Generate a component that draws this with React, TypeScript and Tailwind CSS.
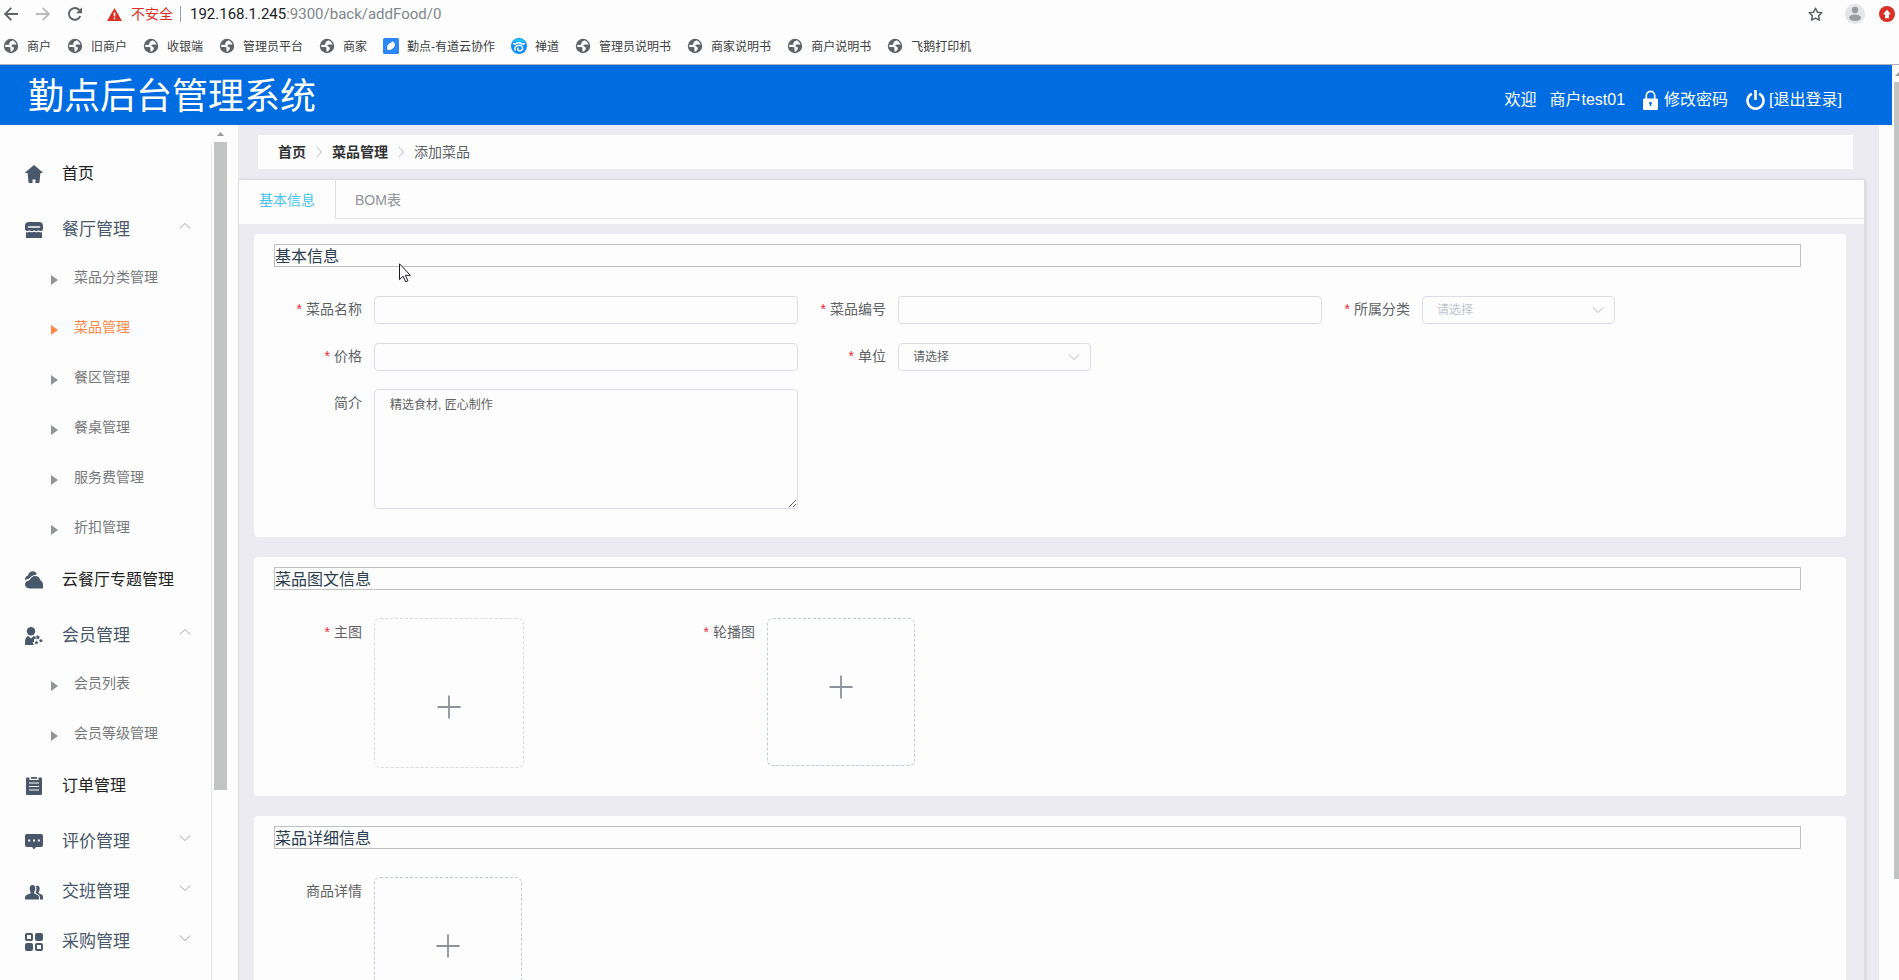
import type { ReactNode } from "react";
import { FiStar } from "react-icons/fi";

type IconName =
  | "home"
  | "shop"
  | "cloud"
  | "member"
  | "order"
  | "comment"
  | "people"
  | "grid";

interface MenuEntry {
  title: string;
  icon: IconName;
  group?: boolean;
  children?: string[];
}

const bookmarks = [
  { title: "商户", icon: "globe" },
  { title: "旧商户", icon: "globe" },
  { title: "收银端", icon: "globe" },
  { title: "管理员平台", icon: "globe" },
  { title: "商家", icon: "globe" },
  { title: "勤点-有道云协作", icon: "youdao" },
  { title: "禅道", icon: "zentao" },
  { title: "管理员说明书", icon: "globe" },
  { title: "商家说明书", icon: "globe" },
  { title: "商户说明书", icon: "globe" },
  { title: "飞鹅打印机", icon: "globe" },
];

const menu: MenuEntry[] = [
  { title: "首页", icon: "home" },
  {
    title: "餐厅管理",
    icon: "shop",
    group: true,
    children: [
      "菜品分类管理",
      "菜品管理",
      "餐区管理",
      "餐桌管理",
      "服务费管理",
      "折扣管理",
    ],
  },
  { title: "云餐厅专题管理", icon: "cloud" },
  {
    title: "会员管理",
    icon: "member",
    group: true,
    children: ["会员列表", "会员等级管理"],
  },
  { title: "订单管理", icon: "order" },
  { title: "评价管理", icon: "comment", group: true },
  { title: "交班管理", icon: "people", group: true },
  { title: "采购管理", icon: "grid", group: true },
];

const activeItem = "菜品管理";

function BookmarkIcon({ name }: { name: string }) {
  if (name === "youdao") {
    return (
      <svg className="size-4" viewBox="0 0 16 16">
        <rect width="16" height="16" rx="1.500" fill="#2d86f5" />
        <path
          d="M4.200 12V8.800C4.200 6.500 6.800 6 9.300 3.600c1.900.6 3 2.200 2.500 3.900C11 9.800 8.800 12 6.500 12Z"
          fill="#fff"
        />
      </svg>
    );
  }
  if (name === "zentao") {
    return (
      <svg className="size-4" viewBox="0 0 16 16">
        <circle cx="8" cy="8" r="8" fill="#0c8dff" />
        <path d="M1.500 4A8 8 0 0 1 14.500 4Z" fill="#1fc3fb" />
        <path
          d="M2.500 5.500C4 7 5.500 4.500 8 4.800s3 1.800 5.500.9M4.200 12C2.800 9.500 5 7.300 8 7.200c3.500 0 4.800 3.500 2.200 5.200-2.200 1.200-4.500-.6-3.200-2.200"
          fill="none"
          stroke="#fff"
          strokeWidth="1.500"
          strokeLinecap="round"
        />
      </svg>
    );
  }
  return (
    <svg className="size-4" viewBox="0 0 16 16">
      <circle cx="8" cy="8" r="7.200" fill="#5f6368" />
      <path
        d="M9.300 2.200C8.500 3.300 7 3.200 6.600 4.400c-.3 1 .4 1.600-.6 2.200-1 .5-2 .3-3.600.2-.2.800-.2 1.500-.1 2.200 1.700-.1 4.300-.3 5 .5.600.8-.3 1.600.2 2.500.3.600.2 1 .1 1.700 1.500-.2 2.800-1.600 3.300-3 .3-1.300-.8-1.900-1.900-2.300-.8-.3-.8-1.100 0-1.500 1-.5 2.500-.3 4.500-.1-.3-2-1.800-3.900-4.200-4.600Z"
        fill="#fff"
      />
    </svg>
  );
}

const iconShapes: Record<IconName, ReactNode> = {
  home: (
    <path d="M9 1 .4 8.200c-.3.300-.1.800.3.800H2.600L3.500 18c0 .6.400 1 1 1h3v-3.600h3V19h3c.6 0 1-.4 1-1L15.400 9h1.900c.4 0 .6-.5.300-.8Z" />
  ),
  shop: (
    <>
      <path
        fillRule="evenodd"
        d="M4 2h10c2.800 0 4 1.500 4 4v3c0 1.300-1 2-2.200 2-1.200 0-1.700-.8-2.300-.8s-1.100.8-2.300.8S9.600 10.200 9 10.200s-1.100.8-2.300.8-1.700-.8-2.300-.8-1 .8-2.200.8C1 11 0 10.300 0 9V6c0-2.500 1.200-4 4-4Zm-.5 4.200a.8.800 0 0 0 0 1.600h11a.8.800 0 0 0 0-1.600Z"
      />
      <path d="M1 12.300c1.600.4 2.700 0 3.500-.6.900.7 2.300.9 4.500 0 1.500.9 3.200.8 4.500 0 .9.700 2 .9 3.500.6V18H1Z" />
    </>
  ),
  cloud: (
    <>
      <path d="M0 10C0 7.500 1 5.800 3 5.500 3.500 3 5.300 1.200 7.800 1.200c1.800 0 3.200 1 4 2.800L6 8Z" />
      <path
        d="M4.500 18.500C1.800 18.500 0 16.800 0 14.600c0-2 1.200-3.500 3.200-3.800C5.500 10.500 5 6.500 10 6c3 0 4.900 1.800 5.500 4.500C17 11 18 12.600 18 14.500v4Z"
        stroke="#fdfdfd"
        strokeWidth="2.200"
        paintOrder="stroke"
      />
    </>
  ),
  member: (
    <>
      <circle cx="6" cy="5.200" r="4.200" />
      <path d="M0 19v-3c0-3.200 1.300-5.300 3.200-6L6 12.500 8.800 10c1 .3 1.800 1 2.300 1.900L9 13.500V16H7.500l1.500 3Z" />
      <path d="m12.800 8.800.7 1.500 1.700.2-1.200 1.200.3 1.700-1.500-.8-1.500.8.3-1.700-1.200-1.200 1.700-.2ZM16 12.500l.6 1.300 1.400.2-1 1 .2 1.500-1.200-.7-1.300.7.200-1.500-1-1 1.500-.2ZM11.500 14.500l.6 1.300 1.400.2-1 1 .2 1.500-1.200-.7-1.300.7.200-1.500-1-1 1.500-.2Z" />
    </>
  ),
  order: (
    <>
      <path d="M2 1.500h2.500V4h9V1.500H16a1 1 0 0 1 1 1V18a1 1 0 0 1-1 1H2a1 1 0 0 1-1-1V2.500a1 1 0 0 1 1-1Z" />
      <path d="M6 1h6v1.800H6Z" />
      <path d="M4 7h10M4 10.500h10M4 14h10" stroke="#fdfdfd" strokeWidth="1.200" />
    </>
  ),
  comment: (
    <>
      <path d="M2 2h14a2 2 0 0 1 2 2v9a2 2 0 0 1-2 2h-5l-2 2.500L7 15H2a2 2 0 0 1-2-2V4c0-1.100.9-2 2-2Z" />
      <path
        d="M3.200 8.500h2M8 8.500h2M12.800 8.500h2"
        stroke="#fdfdfd"
        strokeWidth="2"
      />
    </>
  ),
  people: (
    <>
      <path d="M7.500 3C9.400 3 10.500 4.500 10.300 6.600c-.2 1.900-.8 3-1.300 3.600 0 1.300.8 1.700 2.400 2.200 2 .7 2.600 1.500 2.600 3.600V17.500H0V16c0-2.300 1.200-3 3.300-3.700 1.800-.5 2.400-.9 2.400-2.100-.5-.6-1-1.700-1-3.600C4.600 4.500 5.700 3 7.500 3Z" />
      <path d="M11 4c3-.8 4.300 1.500 3.500 4-.3 1-.6 1.800-.9 2.200 0 1 .6 1.300 1.800 1.800 2 .8 2.600 1.500 2.600 3.700v1.800h-3c.1-3.500-.5-4.900-3.400-6-.8-.3-1-.6-1-1 .8-1.400 1.400-4.200.4-6.500Z" />
    </>
  ),
  grid: (
    <>
      <path
        fillRule="evenodd"
        d="M2 1h4a2 2 0 0 1 2 2v4a2 2 0 0 1-2 2H2a2 2 0 0 1-2-2V3c0-1.100.9-2 2-2Zm0 2v4h4V3ZM12 11h4a2 2 0 0 1 2 2v4a2 2 0 0 1-2 2h-4a2 2 0 0 1-2-2v-4c0-1.100.9-2 2-2Zm0 2v4h4v-4Z"
      />
      <rect x="10" y="1" width="8" height="8" rx="2" />
      <rect y="11" width="8" height="8" rx="2" />
    </>
  ),
};

function MenuIcon({ name }: { name: IconName }) {
  return (
    <svg
      className="h-5 w-[18px] shrink-0"
      viewBox="0 0 18 20"
      fill="#48576a"
      aria-hidden="true"
    >
      {iconShapes[name]}
    </svg>
  );
}

function Chevron({ className }: { className: string }) {
  return (
    <svg
      className={className}
      viewBox="0 0 12 6"
      fill="none"
      stroke="currentColor"
      aria-hidden="true"
    >
      <path d="m.8.5 5.200 5 5.200-5" />
    </svg>
  );
}

function BrowserBar() {
  return (
    <div className="border-b border-[#b0b0b0]">
      <div className="flex h-7 items-center pl-1 pr-1">
        <div className="flex gap-[18px] text-[#5f6368]">
          <button aria-label="后退">
            <svg className="size-3.5" viewBox="0 0 14 14" fill="none" stroke="currentColor" strokeWidth="1.800">
              <path d="M14 7H1.500M7.300.8 1.100 7l6.200 6.200" />
            </svg>
          </button>
          <button aria-label="前进" className="text-[#bababa]">
            <svg className="size-3.5" viewBox="0 0 14 14" fill="none" stroke="currentColor" strokeWidth="1.800">
              <path d="M0 7h12.500M6.700.8 12.900 7l-6.200 6.200" />
            </svg>
          </button>
          <button aria-label="重新加载">
            <svg className="size-3.5" viewBox="0 0 14 14">
              <path
                d="M12.300 9.200A5.900 5.900 0 1 1 11.300 3"
                fill="none"
                stroke="currentColor"
                strokeWidth="1.900"
              />
              <path d="M14 .2V6.200H8Z" fill="currentColor" />
            </svg>
          </button>
        </div>
        <svg className="ml-[25px] h-[13px] w-[15px]" viewBox="0 0 15 13">
          <path d="M7.500 0 15 13H0Z" fill="#d93025" />
          <path d="M7.500 4.500v4M7.500 9.700v1.600" stroke="#fff" strokeWidth="1.600" />
        </svg>
        <span className="ml-[9px] text-sm text-[#d93025]">不安全</span>
        <span className="ml-[7px] h-4 w-px bg-[#9aa0a6]" />
        <span className="ml-[9px] font-[Roboto,'Noto_Sans_CJK_SC',sans-serif] text-[15px] leading-5 text-[#80868b]">
          <span className="text-[#202124]">192.168.1.245</span>
          :9300/back/addFood/0
        </span>
        <div className="ml-auto flex items-center">
          <button aria-label="收藏">
            <FiStar className="size-[15px] text-[#5f6368]" strokeWidth={2.5} />
          </button>
          <button aria-label="用户" className="ml-[22px]">
            <svg className="size-5" viewBox="0 0 20 20">
              <circle cx="10" cy="10" r="10" fill="#e4e5e8" />
              <circle cx="10" cy="6" r="3.200" fill="#9a9da0" />
              <ellipse cx="10" cy="13.800" rx="6" ry="3.200" fill="#9a9da0" />
            </svg>
          </button>
          <button aria-label="更新" className="ml-3.5">
            <svg className="size-4" viewBox="0 0 16 16">
              <circle cx="8" cy="8" r="8" fill="#d93025" />
              <path d="M8 3.800 12 8.200H10v4H6v-4H4Z" fill="#fff" />
            </svg>
          </button>
        </div>
      </div>
      <div className="flex h-9 items-center gap-4 pl-[3px]">
        {bookmarks.map((item) => (
          <a
            key={item.title}
            href="#"
            className="flex items-center gap-2 whitespace-nowrap text-xs text-[#3c4043]"
          >
            <BookmarkIcon name={item.icon} />
            <span className="pt-0.5">{item.title}</span>
          </a>
        ))}
      </div>
    </div>
  );
}

function Header() {
  return (
    <header className="flex h-[60px] shrink-0 items-center justify-between bg-[#006ce1] pl-7 pr-[50px] text-white">
      <h1 className="pt-1 text-4xl">勤点后台管理系统</h1>
      <div className="flex items-center pt-2.5 text-base">
        <span>欢迎</span>
        <span className="ml-[13px]">商户test01</span>
        <a href="#" className="ml-[18px] flex items-center gap-1.5">
          <svg className="h-5 w-[15px]" viewBox="0 0 15 20">
            <path
              d="M3.300 9V5.500a4.200 4.200 0 0 1 8.400 0V9"
              fill="none"
              stroke="#fff"
              strokeWidth="1.700"
            />
            <rect y="8.500" width="15" height="11.500" rx="1" fill="#fff" />
            <path d="M7.500 12v4M6.200 13.300h2.600" stroke="#006ce1" strokeWidth="1.500" />
          </svg>
          修改密码
        </a>
        <a href="#" className="ml-[18px] flex items-center gap-1">
          <svg
            className="h-5 w-[19px]"
            viewBox="0 0 19 20"
            fill="none"
            stroke="#fff"
            strokeWidth="2.600"
          >
            <path d="M5.800 3.600a8 8 0 1 0 7.400 0M9.500 0v10" />
          </svg>
          [退出登录]
        </a>
      </div>
    </header>
  );
}

function Sidebar() {
  return (
    <aside className="flex w-[238px] shrink-0 overflow-hidden">
      <nav className="mt-5 w-[212px] border-r border-[#e6e6e6] pt-1">
        <ul>
          {menu.map((entry) => (
            <li key={entry.title}>
              {entry.group ? (
                <button className="flex h-[50px] w-full items-center pl-[25px] pr-5 text-[17px] text-[#48576a]">
                  <MenuIcon name={entry.icon} />
                  <span className="ml-[19px]">{entry.title}</span>
                  <Chevron
                    className={
                      entry.children
                        ? "mb-2 ml-auto h-1.5 w-3 rotate-180 text-[#a0a4ab]"
                        : "mb-2 ml-auto h-1.5 w-3 text-[#a0a4ab]"
                    }
                  />
                </button>
              ) : (
                <a
                  href="#"
                  className="mb-1.5 flex h-[50px] items-center pl-[25px] text-base text-[#222]"
                >
                  <MenuIcon name={entry.icon} />
                  <span className="ml-[19px]">{entry.title}</span>
                </a>
              )}
              {entry.children && (
                <ul>
                  {entry.children.map((child) => (
                    <li key={child}>
                      <a
                        href="#"
                        className={
                          child === activeItem
                            ? "flex h-[50px] items-center pl-[51px] text-sm text-[#ff8746]"
                            : "flex h-[50px] items-center pl-[51px] text-sm text-[#77787c]"
                        }
                      >
                        <svg
                          className="h-2.5 w-[7px]"
                          viewBox="0 0 7 10"
                          fill={child === activeItem ? "#ff8746" : "#909399"}
                        >
                          <path d="M0 0v10l7-5Z" />
                        </svg>
                        <span className="ml-4 pb-1.5">{child}</span>
                      </a>
                    </li>
                  ))}
                </ul>
              )}
            </li>
          ))}
        </ul>
      </nav>
      <div className="ml-0.5 flex w-[13px] flex-col">
        <div className="flex h-[17px] shrink-0 items-center justify-center">
          <svg className="h-1 w-[7px]" viewBox="0 0 7 4" fill="#9a9a9a">
            <path d="M3.500 0 7 4H0Z" />
          </svg>
        </div>
        <div className="flex-[341] bg-[#c2c4c3]" />
        <div className="flex-[100]" />
      </div>
    </aside>
  );
}

function Breadcrumb() {
  return (
    <nav className="ml-5 mr-[26px] mt-2.5 flex h-[34px] items-center bg-[#fdfdfd] px-5 text-sm">
      <a href="#" className="font-bold text-[#303133]">
        首页
      </a>
      <Chevron className="mx-[7px] h-1.5 w-3 -rotate-90 text-[#b4b8bf]" />
      <a href="#" className="font-bold text-[#303133]">
        菜品管理
      </a>
      <Chevron className="mx-[7px] h-1.5 w-3 -rotate-90 text-[#b4b8bf]" />
      <span className="text-[#606266]">添加菜品</span>
    </nav>
  );
}

function Card({ title, children }: { title: string; children: ReactNode }) {
  return (
    <section className="rounded bg-[#fdfdfd] pb-7 pl-5 pt-2.5">
      <h2 className="mb-7 mr-[45px] h-[23px] border border-[#c0c1c1] text-base text-[#2c3e50]">
        {title}
      </h2>
      {children}
    </section>
  );
}

interface FieldProps {
  id: string;
  label: string;
  required?: boolean;
  children: ReactNode;
}

function Field({ id, label, required, children }: FieldProps) {
  return (
    <div className="flex items-start">
      <label
        htmlFor={id}
        className="w-[100px] shrink-0 pr-3 text-right text-sm leading-7 text-[#606266]"
      >
        {required && <span className="mr-1 text-[#f5222d]">*</span>}
        {label}
      </label>
      {children}
    </div>
  );
}

function TextInput({ id }: { id: string }) {
  return (
    <input
      id={id}
      type="text"
      className="my-px h-7 min-w-0 flex-1 rounded border border-[#dcdce6] px-[15px] text-xs text-[#606266] outline-none"
    />
  );
}

function SelectInput({ id, muted }: { id: string; muted?: boolean }) {
  return (
    <div className="relative my-px w-[193px]">
      <select
        id={id}
        className={
          muted
            ? "h-7 w-full appearance-none rounded border border-[#dcdce6] px-3.5 text-xs text-[#c0c4cc] outline-none"
            : "h-7 w-full appearance-none rounded border border-[#dcdce6] px-3.5 text-xs text-[#606266] outline-none"
        }
      >
        <option>请选择</option>
      </select>
      <Chevron className="pointer-events-none absolute right-[11px] top-[11px] h-1.5 w-3 text-[#b4bcc8]" />
    </div>
  );
}

function Plus() {
  return (
    <svg
      className="size-6"
      viewBox="0 0 24 24"
      stroke="#8c939d"
      strokeWidth="1.800"
      aria-hidden="true"
    >
      <path d="M12 .5v23M.5 12h23" />
    </svg>
  );
}

function PictureCardUpload({ id }: { id: string }) {
  return (
    <button
      id={id}
      type="button"
      className="flex size-[148px] items-center justify-center rounded-md border border-dashed border-[#c0ccda] pb-2.5"
    >
      <Plus />
    </button>
  );
}

function FoodForm() {
  return (
    <form className="flex flex-col gap-5 pb-5 pl-[15px] pr-[18px] pt-2.5">
      <Card title="基本信息">
        <div className="grid grid-cols-3 gap-y-[17px]">
          <Field id="name" label="菜品名称" required>
            <TextInput id="name" />
          </Field>
          <Field id="code" label="菜品编号" required>
            <TextInput id="code" />
          </Field>
          <Field id="category" label="所属分类" required>
            <SelectInput id="category" muted />
          </Field>
          <Field id="price" label="价格" required>
            <TextInput id="price" />
          </Field>
          <div className="col-span-2 grid grid-cols-2">
            <Field id="unit" label="单位" required>
              <SelectInput id="unit" />
            </Field>
          </div>
          <Field id="intro" label="简介">
            <textarea
              id="intro"
              defaultValue="精选食材, 匠心制作"
              className="h-[120px] min-w-0 flex-1 resize-y rounded border border-[#dcdce6] px-[15px] py-1.5 text-xs leading-[18px] text-[#606266] outline-none"
            />
          </Field>
        </div>
      </Card>
      <Card title="菜品图文信息">
        <div className="grid grid-cols-4">
          <Field id="cover" label="主图" required>
            <button
              id="cover"
              type="button"
              className="flex size-[150px] items-center justify-center rounded-md border border-dashed border-[#d9d9d9] pt-7"
            >
              <Plus />
            </button>
          </Field>
          <Field id="banner" label="轮播图" required>
            <PictureCardUpload id="banner" />
          </Field>
        </div>
      </Card>
      <Card title="菜品详细信息">
        <Field id="detail" label="商品详情">
          <PictureCardUpload id="detail" />
        </Field>
      </Card>
    </form>
  );
}

function Tabs() {
  return (
    <div className="mr-3.5 mt-2.5 border border-[#dcdfe6] bg-[#ecebf1] shadow-[0_2px_4px_rgba(0,0,0,0.12),0_0_6px_rgba(0,0,0,0.04)]">
      <div className="bg-[#fdfdfd] pb-[5px]">
        <div className="flex h-[39px] text-sm" role="tablist">
          <button
            role="tab"
            aria-selected="true"
            className="border-r border-[#dcdfe6] px-5 text-[#45c2ee]"
          >
            基本信息
          </button>
          <button
            role="tab"
            aria-selected="false"
            className="flex-1 border-b border-[#e4e7ed] px-[19px] pt-0.5 text-left text-[#909399]"
          >
            BOM表
          </button>
        </div>
      </div>
      <FoodForm />
    </div>
  );
}

function PageScrollbar() {
  return (
    <div className="flex w-[7px] shrink-0 flex-col pl-0.5">
      <div className="flex h-[17px] shrink-0 items-center justify-end">
        <svg className="h-1 w-1" viewBox="0 0 4 4" fill="#9a9a9a">
          <path d="M4 0v4H0Z" />
        </svg>
      </div>
      <div className="flex-[79] bg-[#c2c4c3]" />
      <div className="flex-[10]" />
    </div>
  );
}

export default function App() {
  return (
    <div className="relative flex h-screen flex-col overflow-hidden bg-[#fdfdfd] font-['Liberation_Sans','Noto_Sans_CJK_SC',sans-serif]">
      <BrowserBar />
      <div className="flex min-h-0 flex-1">
        <div className="flex min-w-0 flex-1 flex-col">
          <Header />
          <div className="flex min-h-0 flex-1">
            <Sidebar />
            <main className="mr-[13px] min-w-0 flex-1 overflow-hidden bg-[#ecebf1]">
              <Breadcrumb />
              <Tabs />
            </main>
          </div>
        </div>
        <PageScrollbar />
      </div>
      {/* mouse pointer */}
      <svg
        className="pointer-events-none absolute left-[399px] top-[263px] h-5 w-3"
        viewBox="0 0 12 20"
        fill="#fff"
        stroke="#1a1a2a"
      >
        <path d="M.5.800v15.800l3.600-3.400 2.500 5.600 2.300-1-2.500-5.500h5Z" />
      </svg>
    </div>
  );
}
